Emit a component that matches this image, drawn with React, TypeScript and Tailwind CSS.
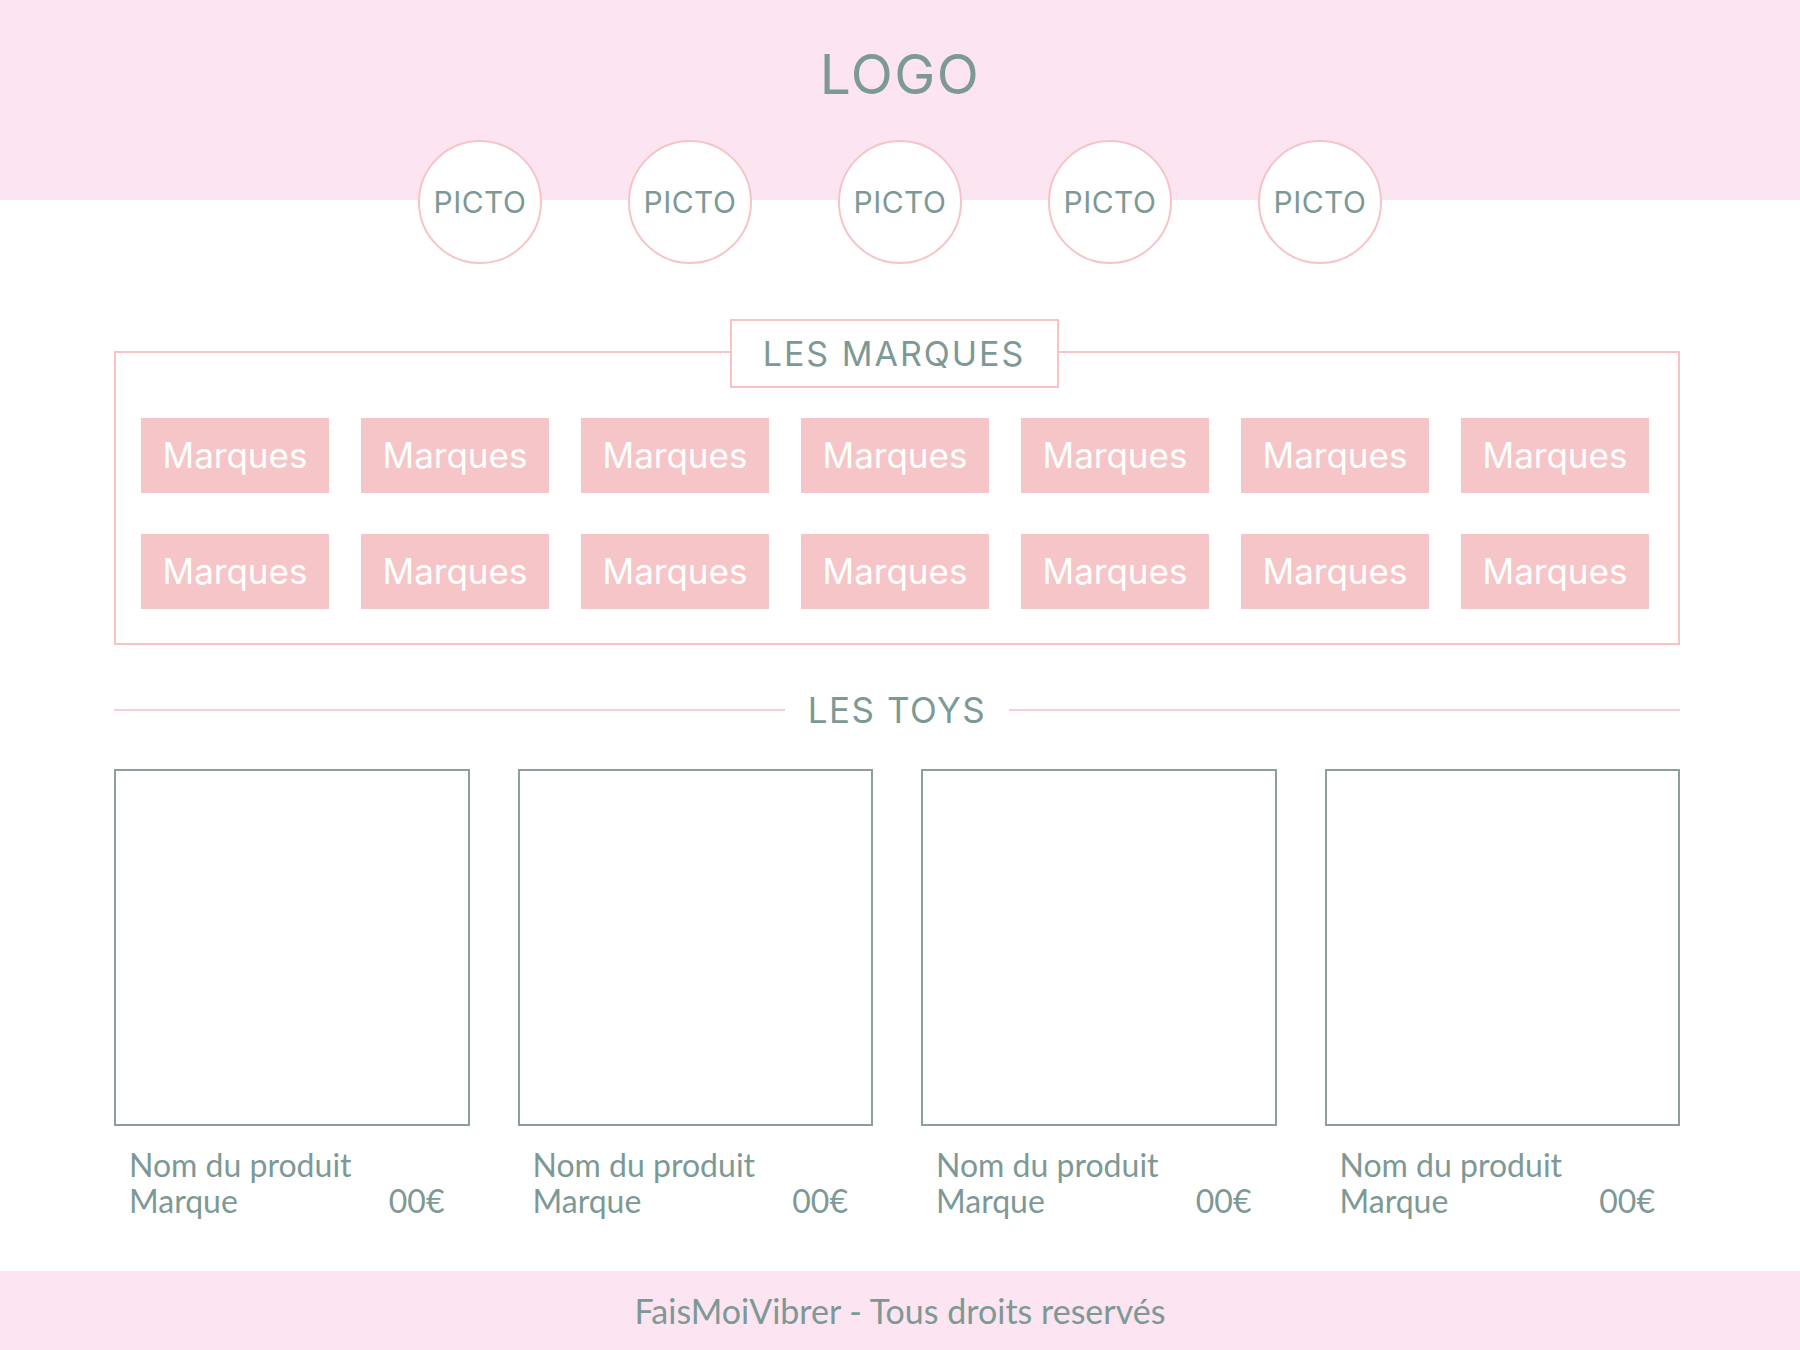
export default function App() {
  const pictos = ["PICTO", "PICTO", "PICTO", "PICTO", "PICTO"];
  const marques = Array.from({ length: 14 }, () => "Marques");
  const toys = [1, 2, 3, 4];

  return (
    <div className="w-[1800px] h-[1350px] bg-white flex flex-col font-['Inter',sans-serif] text-[#7d9995] overflow-hidden">
      {/* HEADER */}
      <header className="h-[200px] bg-[#fce4f1] flex justify-center pt-[47px]">
        <div className="text-[55px] leading-none tracking-[1.5px]">LOGO</div>
      </header>

      {/* PICTOS */}
      <div className="-mt-[60px] flex justify-center gap-[86px]">
        {pictos.map((p, i) => (
          <div
            key={i}
            className="w-[124px] h-[124px] rounded-full border-2 border-[#f6c4c7] bg-white flex items-center justify-center"
          >
            <span className="text-[30px] leading-none tracking-[0.5px]">{p}</span>
          </div>
        ))}
      </div>

      <main className="pl-[114px] pr-[120px]">
        {/* LES MARQUES */}
        <div className="mt-[55px] flex flex-col">
          <div className="relative z-10 self-center -mb-[37px] -translate-x-[3px] w-[329px] h-[69px] border-2 border-[#f6c4c7] bg-white flex items-center justify-center">
            <span className="text-[34px] leading-none tracking-[2px]">LES MARQUES</span>
          </div>
          <div className="border-2 border-[#f6c4c7] pt-[65px] pb-[34px] pl-[25px] pr-[28px]">
            <div className="grid grid-cols-[repeat(7,188px)] gap-x-[32px] gap-y-[41px]">
              {marques.map((m, i) => (
                <div
                  key={i}
                  className="h-[75px] bg-[#f6c5c8] flex items-center justify-center text-white text-[35px] leading-none"
                >
                  {m}
                </div>
              ))}
            </div>
          </div>
        </div>

        {/* LES TOYS */}
        <div className="mt-[45px] h-[40px] flex items-center">
          <div className="flex-1 h-[2px] bg-[#f6cfd2]" />
          <span className="mx-[23px] text-[35px] leading-none tracking-[1.5px]">LES TOYS</span>
          <div className="flex-1 h-[2px] bg-[#f6cfd2]" />
        </div>

        <div className="mt-[39px] grid grid-cols-4 gap-[48px]">
          {toys.map((t) => (
            <div key={t} className="flex flex-col">
              <div className="h-[357px] border-2 border-[#8c9f9c]" />
              <div className="mt-[21px] pl-[15px] pr-[25px] font-['Lato',sans-serif] text-[32px] leading-[36px]">
                <div>Nom du produit</div>
                <div className="flex justify-between">
                  <span>Marque</span>
                  <span>00€</span>
                </div>
              </div>
            </div>
          ))}
        </div>
      </main>

      {/* FOOTER */}
      <footer className="mt-auto h-[79px] bg-[#fce4f1] flex items-center justify-center">
        <p className="font-['Lato',sans-serif] text-[34px] leading-none">
          FaisMoiVibrer - Tous droits reservés
        </p>
      </footer>
    </div>
  );
}
